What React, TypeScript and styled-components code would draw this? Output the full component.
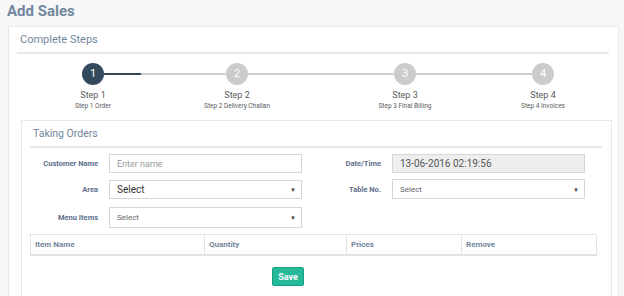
import styled, { createGlobalStyle } from 'styled-components'

const GlobalStyle = createGlobalStyle`
  body {
    margin: 0;
    background: #f7f7f7;
    font-family: Roboto, 'Liberation Sans', Arial, sans-serif;
    color: #73879c;
  }
`

const Page = styled.div`
  width: 624px;
  height: 296px;
  overflow: hidden;
  padding: 0 5px 0 8px;
  box-sizing: border-box;
`

const PageTitle = styled.h3`
  margin: 0 0 0 -1px;
  height: 26px;
  font-size: 15px;
  line-height: 23px;
  font-weight: 700;
  color: #73879c;
`

const Panel = styled.div`
  background: #fff;
  border: 1px solid #e6e9ed;
  padding: 0 9px 0 8px;
  box-sizing: border-box;
  height: 300px;
`

const PanelTitle = styled.div<{ $size?: number }>`
  height: 25px;
  border-bottom: 2px solid #e6e9ed;
  font-size: ${(p) => p.$size ?? 11}px;
  line-height: 26px;
  padding-left: 3px;
  color: #73879c;
`

const Steps = styled.div`
  display: grid;
  grid-template-columns: 96px 192px 144px 132px;
  padding-left: 28px;
  margin-top: 9px;
`

const Step = styled.div`
  display: flex;
  flex-direction: column;
  align-items: center;
`

const Track = styled.div`
  display: flex;
  align-items: center;
  width: 100%;
  height: 22px;
`

const Line = styled.div<{ $tone: 'none' | 'done' | 'todo' }>`
  flex: 1;
  height: 2px;
  background: ${(p) =>
    p.$tone === 'none' ? 'transparent' : p.$tone === 'done' ? '#34495e' : '#cccccc'};
`

const Circle = styled.div<{ $active?: boolean }>`
  width: 22px;
  height: 22px;
  border-radius: 50%;
  background: ${(p) => (p.$active ? '#34495e' : '#cccccc')};
  color: #fff;
  font-size: 11px;
  line-height: 22px;
  text-align: center;
`

const StepName = styled.div`
  margin-top: 5px;
  font-size: 9px;
  line-height: 11px;
  color: #5a5a5a;
`

const StepDesc = styled.div`
  font-size: 6.5px;
  line-height: 10px;
  color: #5a5a5a;
`

const InnerPanel = styled.div`
  margin: 9px -3px 0 4px;
  border: 1px solid #e6e9ed;
  padding: 0 9px 0 8px;
  height: 200px;
`

const FormGrid = styled.div`
  display: grid;
  grid-template-columns: 68px 193px 68px 193px;
  column-gap: 11px;
  row-gap: 6px;
  margin-top: 6px;
  align-items: center;
`

const Label = styled.label`
  text-align: right;
  font-size: 7.5px;
  font-weight: 700;
  color: #5e6e8c;
`

const Field = styled.div<{ $h?: number; $readonly?: boolean }>`
  height: ${(p) => p.$h ?? 19}px;
  box-sizing: border-box;
  border: 1px solid #d6d6d6;
  background: ${(p) => (p.$readonly ? '#eeeeee' : '#fff')};
  display: flex;
  align-items: center;
  justify-content: space-between;
  padding: 0 5px 0 7px;
`

const FieldText = styled.span<{ $size: number; $color?: string }>`
  font-size: ${(p) => p.$size}px;
  color: ${(p) => p.$color ?? '#555'};
`

const Caret = styled.span`
  font-size: 6px;
  color: #444;
`

const Gap = styled.div`
  grid-column: 3 / span 2;
`

const Table = styled.div`
  margin-top: 6px;
  width: 567px;
  display: grid;
  grid-template-columns: 173px 142px 115px 137px;
  border: 1px solid #e3e3e3;
  border-bottom-width: 2px;
  box-sizing: border-box;
`

const HeadCell = styled.div`
  height: 19px;
  line-height: 19px;
  padding-left: 4px;
  font-size: 8px;
  font-weight: 700;
  color: #73879c;
  border-left: 1px solid #e3e3e3;
  &:first-child {
    border-left: none;
  }
`

const Actions = styled.div`
  display: flex;
  padding-left: 242px;
  margin-top: 11px;
`

const SaveButton = styled.button`
  width: 32px;
  height: 19px;
  padding: 0;
  border: 1px solid #169f85;
  border-radius: 2px;
  background: #26b99a;
  color: #fff;
  font-family: inherit;
  font-size: 9px;
  font-weight: 700;
`

const steps = [
  { n: 1, desc: 'Step 1 Order' },
  { n: 2, desc: 'Step 2 Delivery Challan' },
  { n: 3, desc: 'Step 3 Final Billing' },
  { n: 4, desc: 'Step 4 Invoices' },
]

export default function App() {
  return (
    <Page>
      <GlobalStyle />
      <PageTitle>Add Sales</PageTitle>
      <Panel>
        <PanelTitle>Complete Steps</PanelTitle>
        <Steps>
          {steps.map((s, i) => (
            <Step key={s.n}>
              <Track>
                <Line $tone={i === 0 ? 'none' : 'todo'} />
                <Circle $active={i === 0}>{s.n}</Circle>
                <Line $tone={i === steps.length - 1 ? 'none' : i === 0 ? 'done' : 'todo'} />
              </Track>
              <StepName>Step {s.n}</StepName>
              <StepDesc>{s.desc}</StepDesc>
            </Step>
          ))}
        </Steps>

        <InnerPanel>
          <PanelTitle $size={10.5}>Taking Orders</PanelTitle>
          <FormGrid>
            <Label>Customer Name</Label>
            <Field>
              <FieldText $size={9} $color="#999">Enter name</FieldText>
            </Field>
            <Label>Date/Time</Label>
            <Field $readonly>
              <FieldText $size={10}>13-06-2016 02:19:56</FieldText>
            </Field>

            <Label>Area</Label>
            <Field>
              <FieldText $size={10} $color="#333">Select</FieldText>
              <Caret>▼</Caret>
            </Field>
            <Label>Table No.</Label>
            <Field $h={20}>
              <FieldText $size={8} $color="#666">Select</FieldText>
              <Caret>▼</Caret>
            </Field>

            <Label style={{ marginTop: 2 }}>Menu Items</Label>
            <Field $h={21} style={{ marginTop: 2 }}>
              <FieldText $size={8} $color="#666">Select</FieldText>
              <Caret>▼</Caret>
            </Field>
            <Gap />
          </FormGrid>

          <Table>
            <HeadCell>Item Name</HeadCell>
            <HeadCell>Quantity</HeadCell>
            <HeadCell>Prices</HeadCell>
            <HeadCell>Remove</HeadCell>
          </Table>

          <Actions>
            <SaveButton>Save</SaveButton>
          </Actions>
        </InnerPanel>
      </Panel>
    </Page>
  )
}
